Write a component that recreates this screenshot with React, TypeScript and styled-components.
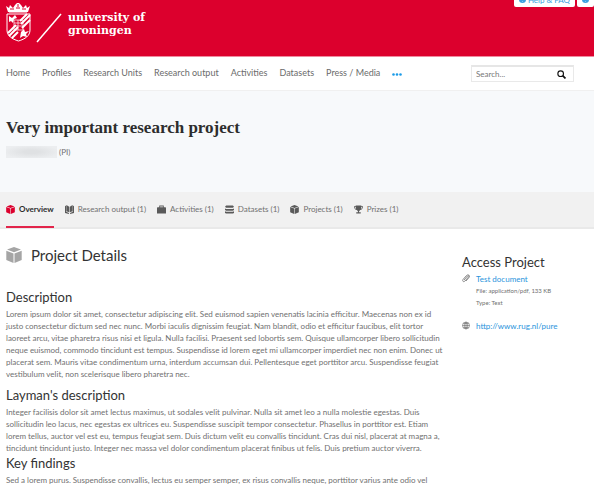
import React from 'react';
import styled, { createGlobalStyle, css } from 'styled-components';

const GlobalStyle = createGlobalStyle`
  *, *::before, *::after { box-sizing: border-box; }
  html { overflow: hidden; }
  body {
    margin: 0;
    background: #fff;
    color: #707070;
    font-family: Lato, "Open Sans", sans-serif;
    font-size: 8px;
    line-height: 12px;
  }
  h1, h2, h3, p, ul { margin: 0; padding: 0; }
  ul { list-style: none; }
  a { color: inherit; text-decoration: none; }
  button, input { font: inherit; }
`;

const Header = styled.header`
  display: flex;
  justify-content: space-between;
  align-items: flex-start;
  height: 57px;
  padding-left: 6px;
  background: #dc002d;
  border-bottom: 1px solid #f08a9f;
  overflow: hidden;
`;

const Brand = styled.a`
  display: flex;
  align-items: flex-start;
  gap: 6px;
  padding-top: 3px;
  color: #fff;
`;

const BrandName = styled.span`
  padding-top: 8px;
  font: bold 11px/13px "DejaVu Serif", serif;
`;

const Utilities = styled.div`
  display: flex;
  gap: 2px;
  margin-top: -11px;
`;

const UtilityButton = styled.button`
  display: flex;
  align-items: center;
  gap: 2px;
  height: 18px;
  padding: 3px 5px 0;
  border: 0;
  border-radius: 2px;
  background: #fff;
  color: #3a9fe0;
  font-size: 8px;
  line-height: 12px;
  white-space: nowrap;
`;

const NavBar = styled.nav`
  display: flex;
  justify-content: space-between;
  align-items: center;
  height: 34px;
  padding: 0 20px 0 6px;
  border-bottom: 1px solid #f0f0f0;
`;

const NavList = styled.ul`
  display: flex;
  gap: 12px;
  align-items: center;
  padding-bottom: 2px;
  color: #6b6b6b;
  font-size: 9px;
  white-space: nowrap;
`;

const MoreButton = styled.button`
  display: block;
  padding: 0;
  border: 0;
  background: none;
  color: #1b9be8;
`;

const Search = styled.form`
  display: flex;
  align-items: center;
  width: 103px;
  height: 17px;
  padding: 0 7px 0 4px;
  border: 1px solid #e9e9e9;
  border-top: 2px solid #e6e6e6;
`;

const SearchInput = styled.input`
  flex: 1;
  min-width: 0;
  padding: 0;
  border: 0;
  outline: 0;
  background: none;
  font-size: 8px;
  &::placeholder { color: #777; opacity: 1; }
`;

const SearchButton = styled.button`
  display: flex;
  padding: 0;
  border: 0;
  background: none;
  color: #111;
`;

const Hero = styled.section`
  height: 101px;
  padding: 27px 6px 0;
  background: #f7f9fb;
`;

const Title = styled.h1`
  color: #2d2d2d;
  font: bold 17px/20px "Liberation Serif", serif;
`;

const Person = styled.p`
  display: flex;
  align-items: center;
  gap: 2px;
  padding-top: 8px;
`;

const Redacted = styled.span`
  width: 51px;
  height: 12px;
  background: radial-gradient(ellipse at center, #dfe1e3 20%, #eceef0 80%);
`;

const Tabs = styled.nav`
  height: 37px;
  padding: 0 6px;
  background: #f1f1f1;
  border-bottom: 2px solid #e9e9e9;
`;

const TabList = styled.ul`
  display: flex;
  gap: 11px;
`;

const Tab = styled.a<{ $active?: boolean }>`
  display: flex;
  align-items: center;
  gap: 4px;
  height: 36px;
  border-bottom: 2px solid transparent;
  white-space: nowrap;
  svg { color: #5a5a5a; }
  ${({ $active }) => $active && css`
    border-color: #e2244a;
    color: #2d2d2d;
    font-weight: bold;
    svg { color: #dc002d; }
  `}
`;

const Content = styled.main`
  display: grid;
  grid-template-columns: minmax(0, 1fr) 126px;
  gap: 18px;
  padding: 16px 6px 0;
`;

const PageHeading = styled.h2`
  display: flex;
  align-items: center;
  gap: 9px;
  margin-bottom: 17px;
  color: #333;
  font-size: 15px;
  font-weight: 400;
  line-height: 20px;
  svg { color: #a5a5a5; }
`;

const Section = styled.section<{ $tight?: boolean }>`
  padding-top: ${({ $tight }) => ($tight ? 0 : 6)}px;
`;

const SectionHeading = styled.h3`
  padding-bottom: 2px;
  color: #333;
  font-size: 13px;
  font-weight: 400;
  line-height: 18px;
`;

const Aside = styled.aside`
  padding-top: 8px;
`;

const Resource = styled.div`
  display: flex;
  gap: 6px;
  margin-bottom: 11px;
  svg { flex: none; margin-top: 1px; color: #777; }
`;

const ResourceLink = styled.a`
  display: block;
  color: #2a94dc;
`;

const Meta = styled.p`
  font-size: 6px;
`;

const Crest = () => (
  <svg width="56" height="42" viewBox="0 0 56 42" fill="none" stroke="#fff">
    <path d="M0 3l3 2 1-3 3 3 2-3 3-3 3 3 2 3 3-3 1 3 3-2-2 6H2z" fill="#fff" stroke="none" />
    <path d="M4 6h4M10 5h4M16 6h4M12 1v3" stroke="#dc002d" />
    <path d="M3 9h18" strokeWidth="1" />
    <path d="M1 11h23v16c0 6-5 9-11.500 11C6 36 1 33 1 27z" />
    <path d="M2 30l8-8M3 33l9-9M6 35l6-6M14 18l7-7M15 21l9-9M16 25l8-8" strokeWidth="2" />
    <path d="M8 17h9v10H8zM8 20h9M8 23h9M12 17v10" strokeWidth=".7" />
    <path d="M15 29l3-3 1 3 4-1-3 3 1 3-4-1-3 2zM3 13l3 2 3-3 2 3-3 1-1 4-2-2-2 1z" fill="#fff" stroke="none" />
    <path d="M31 39L55 11" strokeWidth="1.500" />
  </svg>
);

const Cube = ({ size = 9 }: { size?: number }) => (
  <svg width={size} height={size} viewBox="0 0 16 16" fill="currentColor">
    <path d="M8 0l7 2.600L8 5.300 1 2.600zM.3 3.700l7.200 2.700V16L.3 13zM15.700 3.700L8.500 6.400V16l7.200-3z" />
  </svg>
);
const Book = () => (
  <svg width="9" height="9" viewBox="0 0 16 16" fill="currentColor">
    <path d="M0 2l2-1v11l5 2v2l-7-2zM2.500 0L7.500 3v10l-5-2zM16 2l-2-1v11l-5 2v2l7-2zM13.500 0L8.500 3v10l5-2z" />
  </svg>
);
const Briefcase = () => (
  <svg width="9" height="9" viewBox="0 0 16 16" fill="currentColor">
    <path d="M4 4V1h8v3h3l1 1v10H0V5l1-1zm1.500 0h5V2.500h-5z" />
  </svg>
);
const Database = () => (
  <svg width="9" height="9" viewBox="0 0 16 16" fill="currentColor">
    <path d="M2 1h12l2 2-2 2H2L0 3zM0 6l2 1h12l2-1v3l-2 1H2L0 9zM0 11l2 1h12l2-1v3l-2 1H2l-2-1z" />
  </svg>
);
const Trophy = () => (
  <svg width="9" height="9" viewBox="0 0 16 16" fill="currentColor">
    <path d="M3 1h10v1h3c0 4-2 6-5 7l-2 2v2h3v2H4v-2h3v-2L5 9C2 8 0 6 0 2h3zM1.500 3.500c0 2 1 3 2 3.500L3 3.500zM14.500 3.500H13L12.500 7c1-.5 2-1.500 2-3.500z" />
  </svg>
);
const Magnifier = () => (
  <svg width="9" height="9" viewBox="0 0 16 16" fill="none" stroke="currentColor" strokeWidth="2">
    <circle cx="6.500" cy="6.500" r="5" />
    <path d="M10 10l5 5" strokeWidth="3" />
  </svg>
);
const Clip = () => (
  <svg width="8" height="9" viewBox="0 0 16 18" fill="none" stroke="currentColor" strokeWidth="1.700">
    <path d="M4 12l7-8c2-2 4 0 2 2l-7 8c-3 3-6 0-4-3l7-8c3-3 8 0 5 4l-6 7" />
  </svg>
);
const Globe = () => (
  <svg width="8" height="9" viewBox="0 0 16 18" fill="none" stroke="currentColor" strokeWidth="1.400">
    <circle cx="8" cy="9" r="7" />
    <path d="M8 2v14M1 9h14M3 5h10M3 13h10M8 2C4 6 4 12 8 16M8 2c4 4 4 10 0 14" />
  </svg>
);
const Dots = () => (
  <svg width="10" height="3" viewBox="0 0 10 3" fill="currentColor">
    <circle cx="1.500" cy="1.500" r="1.300" />
    <circle cx="5" cy="1.500" r="1.300" />
    <circle cx="8.500" cy="1.500" r="1.300" />
  </svg>
);
const HelpMark = () => (
  <svg width="7" height="7" viewBox="0 0 14 14">
    <circle cx="7" cy="7" r="7" fill="currentColor" />
    <path d="M5 5c0-3 5-2 4 0L7 8M7 10v1" fill="none" stroke="#fff" strokeWidth="1.500" />
  </svg>
);

const navItems = ['Home', 'Profiles', 'Research Units', 'Research output', 'Activities', 'Datasets', 'Press / Media'];

const tabs = [
  { label: 'Overview', icon: <Cube />, active: true },
  { label: 'Research output (1)', icon: <Book /> },
  { label: 'Activities (1)', icon: <Briefcase /> },
  { label: 'Datasets (1)', icon: <Database /> },
  { label: 'Projects (1)', icon: <Cube /> },
  { label: 'Prizes (1)', icon: <Trophy /> },
];

const sections = [
  {
    title: 'Description',
    text: 'Lorem ipsum dolor sit amet, consectetur adipiscing elit. Sed euismod sapien venenatis lacinia efficitur. Maecenas non ex id justo consectetur dictum sed nec nunc. Morbi iaculis dignissim feugiat. Nam blandit, odio et efficitur faucibus, elit tortor laoreet arcu, vitae pharetra risus nisi et ligula. Nulla facilisi. Praesent sed lobortis sem. Quisque ullamcorper libero sollicitudin neque euismod, commodo tincidunt est tempus. Suspendisse id lorem eget mi ullamcorper imperdiet nec non enim. Donec ut placerat sem. Mauris vitae condimentum urna, interdum accumsan dui. Pellentesque eget porttitor arcu. Suspendisse feugiat vestibulum velit, non scelerisque libero pharetra nec.',
  },
  {
    title: "Layman's description",
    text: 'Integer facilisis dolor sit amet lectus maximus, ut sodales velit pulvinar. Nulla sit amet leo a nulla molestie egestas. Duis sollicitudin leo lacus, nec egestas ex ultrices eu. Suspendisse suscipit tempor consectetur. Phasellus in porttitor est. Etiam lorem tellus, auctor vel est eu, tempus feugiat sem. Duis dictum velit eu convallis tincidunt. Cras dui nisl, placerat at magna a, tincidunt tincidunt justo. Integer nec massa vel dolor condimentum placerat finibus ut felis. Duis pretium auctor viverra.',
  },
  {
    title: 'Key findings',
    tight: true,
    text: 'Sed a lorem purus. Suspendisse convallis, lectus eu semper semper, ex risus convallis neque, porttitor varius ante odio vel',
  },
];

export default function App() {
  return (
    <>
      <GlobalStyle />
      <Header>
        <Brand href="#">
          <Crest />
          <BrandName>university of<br />groningen</BrandName>
        </Brand>
        <Utilities>
          <UtilityButton><HelpMark />Help &amp; FAQ</UtilityButton>
          <UtilityButton aria-label="Language"><HelpMark /></UtilityButton>
        </Utilities>
      </Header>
      <NavBar>
        <NavList>
          {navItems.map((item) => <li key={item}><a href="#">{item}</a></li>)}
          <li><MoreButton aria-label="More"><Dots /></MoreButton></li>
        </NavList>
        <Search>
          <SearchInput aria-label="Search" placeholder="Search..." />
          <SearchButton aria-label="Submit search"><Magnifier /></SearchButton>
        </Search>
      </NavBar>
      <Hero>
        <Title>Very important research project</Title>
        <Person><Redacted />(PI)</Person>
      </Hero>
      <Tabs>
        <TabList>
          {tabs.map((t) => (
            <li key={t.label}><Tab href="#" $active={t.active}>{t.icon}{t.label}</Tab></li>
          ))}
        </TabList>
      </Tabs>
      <Content>
        <div>
          <PageHeading><Cube size={16} />Project Details</PageHeading>
          {sections.map((s) => (
            <Section key={s.title} $tight={s.tight}>
              <SectionHeading>{s.title}</SectionHeading>
              <p>{s.text}</p>
            </Section>
          ))}
        </div>
        <Aside>
          <SectionHeading>Access Project</SectionHeading>
          <Resource>
            <Clip />
            <div>
              <ResourceLink href="#">Test document</ResourceLink>
              <Meta>File: application/pdf, 133 KB</Meta>
              <Meta>Type: Text</Meta>
            </div>
          </Resource>
          <Resource>
            <Globe />
            <ResourceLink href="http://www.rug.nl/pure">http://www.rug.nl/pure</ResourceLink>
          </Resource>
        </Aside>
      </Content>
    </>
  );
}
